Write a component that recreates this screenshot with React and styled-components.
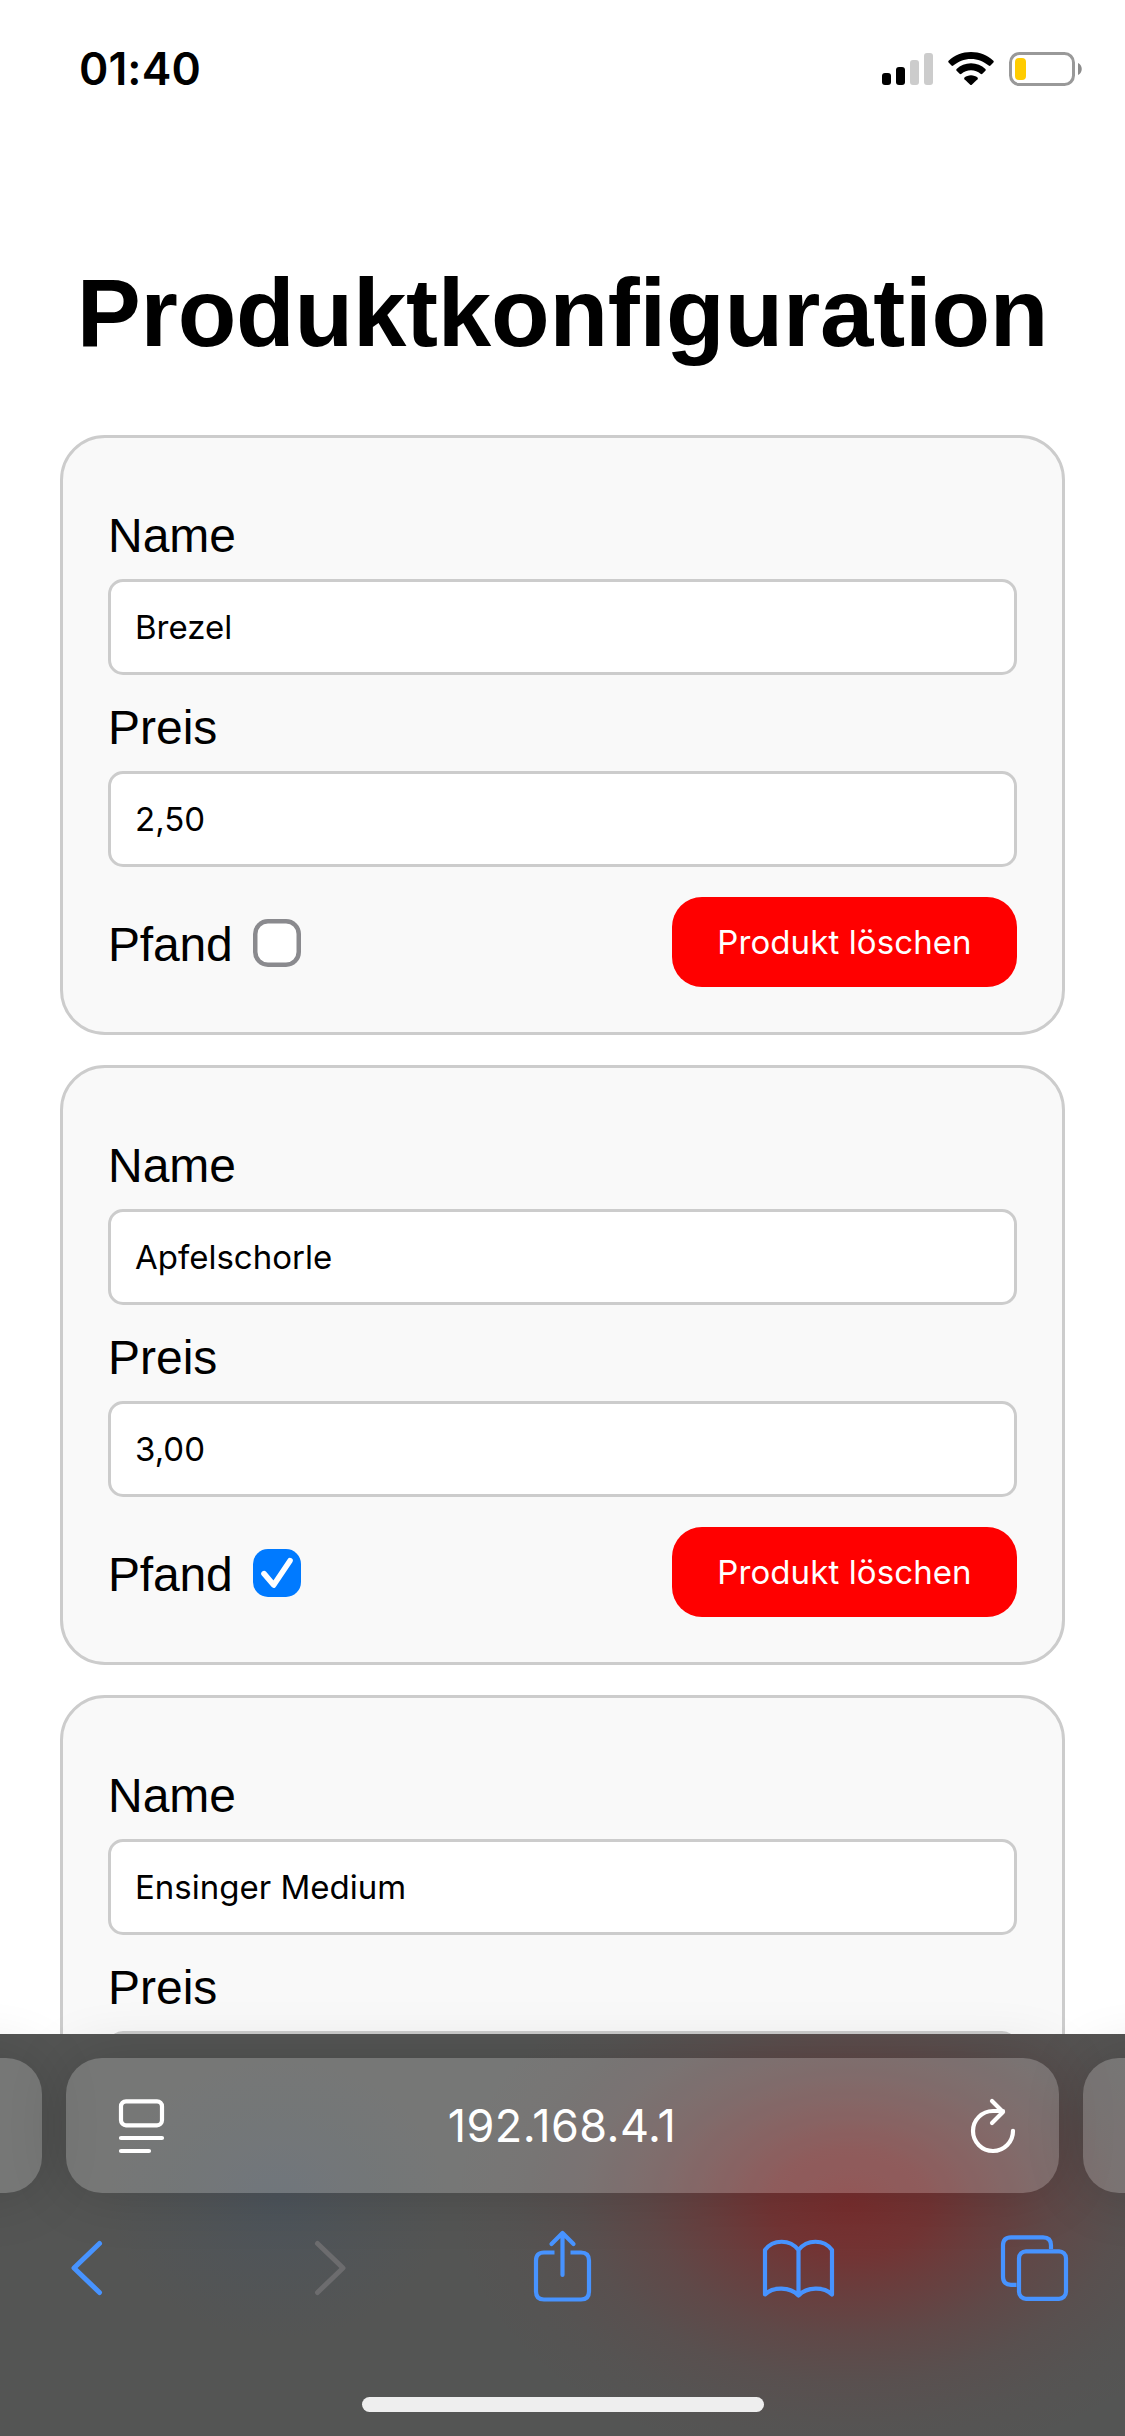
import React, { useState } from "react";
import styled, { createGlobalStyle } from "styled-components";

const GlobalStyle = createGlobalStyle`
  *, *::before, *::after { box-sizing: border-box; }
  body { margin: 0; background: #fff; }
`;

const uiFont = `Inter, "Liberation Sans", sans-serif`;
const pageFont = `"Liberation Sans", Arial, sans-serif`;

const Screen = styled.div`
  width: 1125px;
  height: 2436px;
  display: flex;
  flex-direction: column;
  overflow: hidden;
  background: #fff;
  color: #000;
`;

const StatusBar = styled.header`
  flex: none;
  height: 132px;
  padding: 52px 43px 0 79px;
  display: flex;
  justify-content: space-between;
  align-items: flex-start;
`;

const Clock = styled.time`
  font: 600 44.5px/54px ${uiFont};
  letter-spacing: 0.1px;
  margin-top: -10px;
`;

const StatusIcons = styled.div`
  display: flex;
  gap: 15px;
`;

const Icon = styled.svg`
  display: block;
  flex: none;
  overflow: visible;
  fill: none;
  stroke: currentColor;
  stroke-width: ${(p) => p.$weight || 4.2};
  stroke-linecap: round;
  stroke-linejoin: round;
`;

const Page = styled.main`
  flex: 1;
  min-height: 0;
  overflow: hidden;
  padding: 126px 60px 0;
`;

const Title = styled.h1`
  margin: 0 -30px 67px;
  font: 700 96px/110px ${pageFont};
  letter-spacing: -0.22px;
  text-align: center;
  white-space: nowrap;
`;

const ProductList = styled.div`
  display: flex;
  flex-direction: column;
  gap: 30px;
`;

const Card = styled.section`
  height: 600px;
  padding: 71px 45px 45px;
  border: 3px solid #ccc;
  border-radius: 45px;
  background: #f9f9f9;
`;

const Field = styled.label`
  display: flex;
  flex-direction: column;
  gap: 16px;
  margin-bottom: 26px;
`;

const LabelText = styled.span`
  font: 400 48px/54px ${pageFont};
`;

const TextInput = styled.input`
  width: 100%;
  height: 96px;
  padding: 0 24px;
  border: 3px solid #ccc;
  border-radius: 15px;
  background: #fff;
  color: #000;
  font: 400 33px/40px ${uiFont};
  outline: none;
`;

const CardFooter = styled.div`
  display: flex;
  justify-content: space-between;
  margin-top: 30px;
`;

const Deposit = styled.div`
  display: flex;
  align-items: flex-start;
  gap: 22px;
  padding-top: 22px;

  ${LabelText} {
    width: 123px;
    margin-top: -1px;
    letter-spacing: -0.2px;
  }
`;

const CheckBox = styled.button`
  width: 48px;
  height: 48px;
  padding: 0;
  border: 0;
  border-radius: 15px;
  background: ${(p) => (p.$on ? "#007aff" : "#fff")};
  box-shadow: ${(p) => (p.$on ? "none" : "inset 0 0 0 4.5px #8a8a8e")};
  color: #fff;
`;

const DeleteButton = styled.button`
  width: 345px;
  height: 90px;
  padding: 0;
  border: 0;
  border-radius: 30px;
  background: #f00;
  color: #fff;
  font: 400 33px/40px ${uiFont};
  letter-spacing: 0.1px;
  white-space: nowrap;
`;

const BrowserChrome = styled.footer`
  flex: none;
  height: 402px;
  display: flex;
  flex-direction: column;
  align-items: center;
  padding-top: 24px;
  background:
    radial-gradient(
      ellipse 400px 270px at 850px 168px,
      rgba(120, 46, 46, 1) 0%,
      rgba(120, 46, 46, 0.84) 20%,
      rgba(120, 46, 46, 0.6) 33%,
      rgba(120, 46, 46, 0.32) 50%,
      rgba(120, 46, 46, 0.13) 67%,
      rgba(120, 46, 46, 0.04) 83%,
      rgba(120, 46, 46, 0) 100%
    ),
    radial-gradient(ellipse 170px 140px at 278px 165px, rgba(76, 84, 92, 0.9), rgba(76, 84, 92, 0.4) 50%, rgba(76, 84, 92, 0)),
    #545554;
`;

const TabStrip = styled.div`
  width: 1125px;
  height: 135px;
  display: flex;
  justify-content: center;
  gap: 24px;
`;

const Tab = styled.div`
  flex: none;
  width: 993px;
  height: 135px;
  display: flex;
  align-items: center;
  justify-content: space-between;
  padding: 0 44px 0 53px;
  border-radius: 36px;
  background: rgba(255, 255, 255, 0.2);
  box-shadow: 0 0 60px rgba(0, 0, 0, 0.16);
  color: #fff;
`;

const Address = styled.span`
  margin-right: 11px;
  font: 400 45px/54px ${uiFont};
  letter-spacing: 0.45px;
`;

const Toolbar = styled.nav`
  width: 1125px;
  height: 76px;
  margin-top: 37px;
  display: flex;
  justify-content: center;
`;

const ToolButton = styled.button`
  flex: none;
  width: 236px;
  height: 76px;
  padding: 0;
  border: 0;
  background: none;
  display: flex;
  align-items: center;
  justify-content: center;
  color: ${(p) => (p.$off ? "#6c6c6e" : "#4793ff")};
`;

const HomeIndicator = styled.div`
  width: 402px;
  height: 15px;
  margin-top: 91px;
  border-radius: 8px;
  background: #eee;
`;

function SignalIcon() {
  return (
    <Icon width="51" height="34" viewBox="0 0 51 34">
      <g stroke="none">
        <rect x="0" y="21" width="9" height="12" rx="3" fill="#000" />
        <rect x="14" y="15" width="9" height="18" rx="3" fill="#000" />
        <rect x="28" y="8" width="9" height="25" rx="3" fill="#ccc" />
        <rect x="42" y="1" width="9" height="32" rx="3" fill="#ccc" />
      </g>
    </Icon>
  );
}

function WifiIcon() {
  return (
    <Icon width="46" height="34" viewBox="0 0 46 34">
      <g fill="#000" stroke="none">
        <path d="M23 0C31.700 0 39.500 3.300 45.400 8.800Q46.300 9.700 45.400 10.600L42.500 13.600Q41.600 14.500 40.700 13.600C36 9.400 29.800 6.900 23 6.900S10 9.400 5.300 13.600Q4.400 14.500 3.500 13.600L.6 10.600Q-.3 9.700 .6 8.800C6.500 3.300 14.300 0 23 0Z" />
        <path d="M23 11.300C28.600 11.300 33.600 13.400 37.400 16.900Q38.300 17.800 37.400 18.700L34.400 21.700Q33.500 22.600 32.500 21.700C30 19.500 26.700 18.200 23 18.200S16 19.500 13.500 21.700Q12.500 22.600 11.600 21.700L8.600 18.700Q7.700 17.800 8.600 16.900C12.400 13.400 17.400 11.300 23 11.300Z" />
        <path d="M23 23.300C25.500 23.300 27.800 24.200 29.500 25.600Q30.400 26.400 29.500 27.300L23.800 32.700Q23 33.400 22.200 32.700L16.500 27.300Q15.600 26.400 16.500 25.600C18.200 24.200 20.500 23.300 23 23.300Z" />
      </g>
    </Icon>
  );
}

function BatteryIcon() {
  return (
    <Icon $weight={3} width="73" height="34" viewBox="0 0 73 34">
      <rect x="1.500" y="1.500" width="63" height="31" rx="9" stroke="#999" />
      <rect x="6" y="6" width="11" height="22" rx="4" fill="#fc0" stroke="none" />
      <path d="M69 11C74 13 74 21 69 23Z" fill="#8c8c8c" stroke="none" />
    </Icon>
  );
}

function ReaderIcon() {
  return (
    <Icon width="45" height="54" viewBox="0 0 45 54">
      <rect x="2" y="2.300" width="41" height="24" rx="5" />
      <path d="M2 39H43M2 52H30" />
    </Icon>
  );
}

function ReloadIcon() {
  return (
    <Icon width="44" height="54" viewBox="0 0 44 54">
      <path d="M42 31.800A20 20 0 1 1 22 12H32M21 2L32 13L21 24" />
    </Icon>
  );
}

function BackIcon() {
  return (
    <Icon $weight={5} width="39" height="54" viewBox="0 0 39 54">
      <path d="M28.500 2.500L3 27L28.500 51.500" />
    </Icon>
  );
}

function ForwardIcon() {
  return (
    <Icon $weight={5} width="39" height="54" viewBox="0 0 39 54">
      <path d="M10.500 2.500L36 27L10.500 51.500" />
    </Icon>
  );
}

function ShareIcon() {
  return (
    <Icon width="57" height="76" viewBox="0 0 57 76">
      <path d="M20.500 22.500H10Q2 22.500 2 30.500V61.500Q2 69.500 10 69.500H47Q55 69.500 55 61.500V30.500Q55 22.500 47 22.500H36.500" strokeLinecap="butt" />
      <path d="M28.500 45V3M17.500 14L28.500 3L39.500 14" />
    </Icon>
  );
}

function BookIcon() {
  return (
    <Icon width="71" height="59" viewBox="0 0 71 59">
      <path d="M35.500 11C27 0 10 0 2 11V55.500C10 47.500 27 47.500 35.500 56.500C44 47.500 61 47.500 69 55.500V11C61 0 44 0 35.500 11ZM35.500 11V56.500" />
    </Icon>
  );
}

function TabsIcon() {
  return (
    <Icon width="67" height="66" viewBox="0 0 67 66">
      <rect x="18" y="16.300" width="47" height="47.500" rx="7" />
      <path d="M15.500 49.800H10Q2 49.800 2 41.800V10.300Q2 2.300 10 2.300H42Q50 2.300 50 10.300V14" strokeLinecap="butt" />
    </Icon>
  );
}

function DepositRow({ initial }) {
  const [on, setOn] = useState(initial);
  return (
    <CardFooter>
      <Deposit>
        <LabelText>Pfand</LabelText>
        <CheckBox
          type="button"
          role="checkbox"
          aria-checked={on}
          aria-label="Pfand"
          $on={on}
          onClick={() => setOn(!on)}
        >
          {on && (
            <Icon $weight={5.6} width="48" height="48" viewBox="0 0 48 48">
              <path d="M11 24.600L20.700 36L37 11.700" />
            </Icon>
          )}
        </CheckBox>
      </Deposit>
      <DeleteButton type="button">Produkt löschen</DeleteButton>
    </CardFooter>
  );
}

function Product({ product }) {
  return (
    <Card>
      <Field>
        <LabelText>Name</LabelText>
        <TextInput defaultValue={product.name} />
      </Field>
      <Field>
        <LabelText>Preis</LabelText>
        <TextInput defaultValue={product.price} />
      </Field>
      {product.deposit !== undefined && <DepositRow initial={product.deposit} />}
    </Card>
  );
}

const products = [
  { name: "Brezel", price: "2,50", deposit: false },
  { name: "Apfelschorle", price: "3,00", deposit: true },
  { name: "Ensinger Medium", price: "" },
];

export default function App() {
  return (
    <Screen>
      <GlobalStyle />
      <StatusBar>
        <Clock>01:40</Clock>
        <StatusIcons>
          <SignalIcon />
          <WifiIcon />
          <BatteryIcon />
        </StatusIcons>
      </StatusBar>
      <Page>
        <Title>Produktkonfiguration</Title>
        <ProductList>
          {products.map((product) => (
            <Product key={product.name} product={product} />
          ))}
        </ProductList>
      </Page>
      <BrowserChrome>
        <TabStrip>
          <Tab />
          <Tab>
            <ReaderIcon />
            <Address>192.168.4.1</Address>
            <ReloadIcon />
          </Tab>
          <Tab />
        </TabStrip>
        <Toolbar>
          <ToolButton><BackIcon /></ToolButton>
          <ToolButton $off><ForwardIcon /></ToolButton>
          <ToolButton><ShareIcon /></ToolButton>
          <ToolButton><BookIcon /></ToolButton>
          <ToolButton><TabsIcon /></ToolButton>
        </Toolbar>
        <HomeIndicator />
      </BrowserChrome>
    </Screen>
  );
}
